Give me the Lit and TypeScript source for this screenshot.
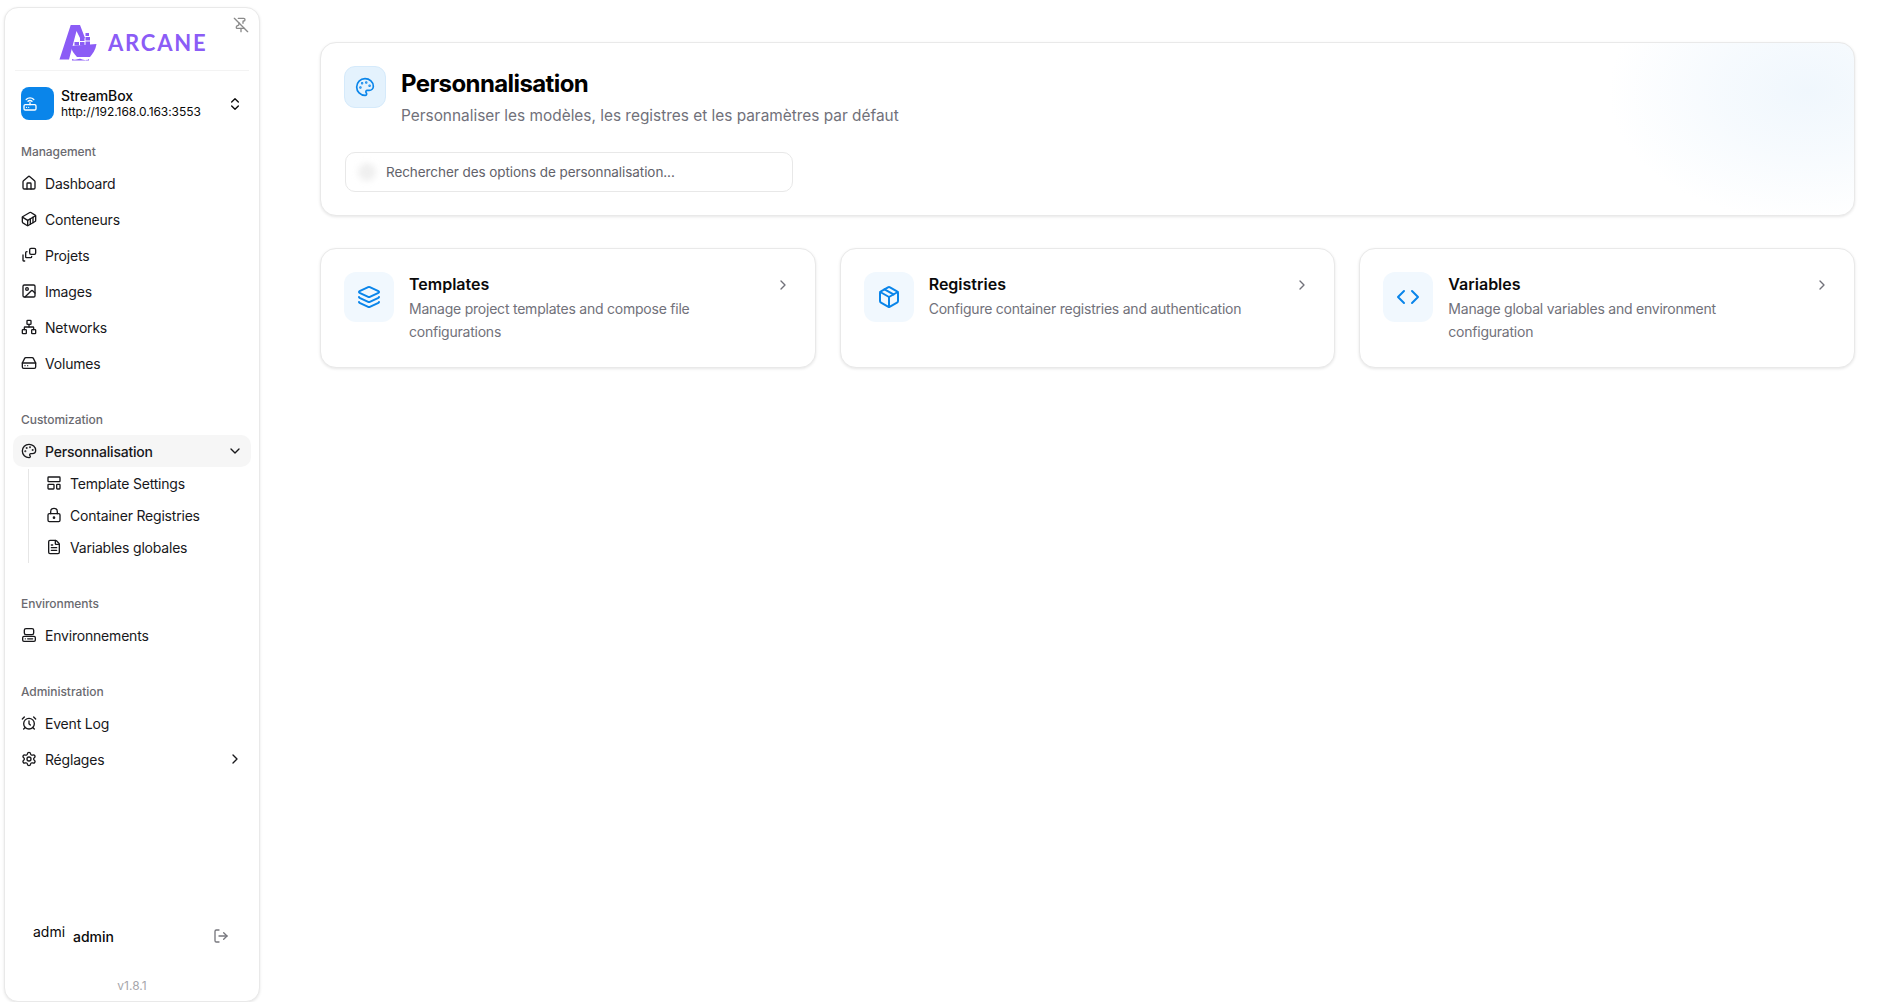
import { LitElement, html, css, svg } from "lit";
import { customElement } from "lit/decorators.js";

const I: Record<string, any> = {
  house: svg`<path d="M15 21v-8a1 1 0 0 0-1-1h-4a1 1 0 0 0-1 1v8"/><path d="M3 10a2 2 0 0 1 .709-1.528l7-5.999a2 2 0 0 1 2.582 0l7 5.999A2 2 0 0 1 21 10v9a2 2 0 0 1-2 2H5a2 2 0 0 1-2-2z"/>`,
  container: svg`<path d="M22 7.7c0-.6-.4-1.2-.8-1.5l-6.3-3.9a1.72 1.72 0 0 0-1.7 0l-10.3 6c-.5.2-.9.8-.9 1.4v6.6c0 .5.4 1.2.8 1.5l6.3 3.9a1.72 1.72 0 0 0 1.7 0l10.3-6c.5-.3.9-1 .9-1.5Z"/><path d="M10 21.9V14L2.1 9.1"/><path d="m10 14 11.9-6.9"/><path d="M14 19.8v-8.1"/><path d="M18 17.5V9.4"/>`,
  projects: svg`<rect x="13" y="2" width="9" height="9" rx="2"/><path d="M9 7H8.500a1.500 1.500 0 0 0-1.500 1.500V15a1 1 0 0 0 1 1h6.500a1.500 1.500 0 0 0 1.500-1.500V14"/><path d="M3 12v8a1 1 0 0 0 1 1h1.500"/>`,
  image: svg`<rect x="3" y="3" width="18" height="18" rx="2"/><circle cx="9" cy="9" r="2"/><path d="m21 15-3.086-3.086a2 2 0 0 0-2.828 0L6 21"/>`,
  network: svg`<rect x="16" y="16" width="6" height="6" rx="1"/><rect x="2" y="16" width="6" height="6" rx="1"/><rect x="9" y="2" width="6" height="6" rx="1"/><path d="M5 16v-3a1 1 0 0 1 1-1h12a1 1 0 0 1 1 1v3"/><path d="M12 12V8"/>`,
  drive: svg`<line x1="22" x2="2" y1="12" y2="12"/><path d="M5.450 5.110 2 12v6a2 2 0 0 0 2 2h16a2 2 0 0 0 2-2v-6l-3.450-6.890A2 2 0 0 0 16.760 4H7.240a2 2 0 0 0-1.790 1.110z"/><line x1="6" x2="6.010" y1="16" y2="16"/><line x1="10" x2="10.010" y1="16" y2="16"/>`,
  palette: svg`<path d="M12 22a1 1 0 0 1 0-20 10 9 0 0 1 10 9 5 5 0 0 1-5 5h-2.250a1.750 1.750 0 0 0-1.400 2.800l.3.4a1.750 1.750 0 0 1-1.400 2.800z"/><circle cx="13.500" cy="6.500" r=".5" fill="currentColor"/><circle cx="17.500" cy="10.500" r=".5" fill="currentColor"/><circle cx="6.500" cy="12.500" r=".5" fill="currentColor"/><circle cx="8.500" cy="7.500" r=".5" fill="currentColor"/>`,
  template: svg`<rect x="3" y="3" width="18" height="7" rx="1"/><rect x="3" y="14" width="9" height="7" rx="1"/><rect x="16" y="14" width="5" height="7" rx="1"/>`,
  lock: svg`<circle cx="12" cy="16" r="1"/><rect x="3" y="10" width="18" height="12" rx="2"/><path d="M7 10V7a5 5 0 0 1 10 0v3"/>`,
  file: svg`<path d="M6 22a2 2 0 0 1-2-2V4a2 2 0 0 1 2-2h8a2.400 2.400 0 0 1 1.704.706l3.588 3.588A2.400 2.400 0 0 1 20 8v12a2 2 0 0 1-2 2z"/><path d="M14 2v5a1 1 0 0 0 1 1h5"/><path d="M10 9H8"/><path d="M16 13H8"/><path d="M16 17H8"/>`,
  server: svg`<rect x="5" y="2.500" width="14" height="9" rx="2.500"/><rect x="2.500" y="14" width="19" height="7.500" rx="2"/><path d="M6.500 17.800h.01"/><path d="M10 17.800h7.500"/>`,
  alarm: svg`<circle cx="12" cy="13" r="8"/><path d="M12 9v4l2 2"/><path d="M5 3 2 6"/><path d="m22 6-3-3"/><path d="M6.380 18.700 4 21"/><path d="M17.640 18.670 20 21"/>`,
  settings: svg`<path d="M9.671 4.136a2.340 2.340 0 0 1 4.659 0 2.340 2.340 0 0 0 3.319 1.915 2.340 2.340 0 0 1 2.330 4.033 2.340 2.340 0 0 0 0 3.831 2.340 2.340 0 0 1-2.330 4.033 2.340 2.340 0 0 0-3.319 1.915 2.340 2.340 0 0 1-4.659 0 2.340 2.340 0 0 0-3.320-1.915 2.340 2.340 0 0 1-2.330-4.033 2.340 2.340 0 0 0 0-3.831A2.340 2.340 0 0 1 6.350 6.051a2.340 2.340 0 0 0 3.319-1.915"/><circle cx="12" cy="12" r="3"/>`,
  logout: svg`<path d="m16 17 5-5-5-5"/><path d="M21 12H9"/><path d="M9 21H5a2 2 0 0 1-2-2V5a2 2 0 0 1 2-2h4"/>`,
  pinoff: svg`<path d="M12 17v5"/><path d="M15 9.340V7a1 1 0 0 1 1-1 2 2 0 0 0 0-4H7.890"/><path d="m2 2 20 20"/><path d="M9 9v1.760a2 2 0 0 1-1.110 1.790l-1.780.9A2 2 0 0 0 5 15.240V16a1 1 0 0 0 1 1h11"/>`,
  layers: svg`<path d="M12.830 2.180a2 2 0 0 0-1.660 0L2.600 6.080a1 1 0 0 0 0 1.830l8.580 3.910a2 2 0 0 0 1.660 0l8.580-3.900a1 1 0 0 0 0-1.830z"/><path d="M2 12a1 1 0 0 0 .58.91l8.600 3.910a2 2 0 0 0 1.650 0l8.580-3.900A1 1 0 0 0 22 12"/><path d="M2 17a1 1 0 0 0 .58.91l8.600 3.910a2 2 0 0 0 1.650 0l8.580-3.900A1 1 0 0 0 22 17"/>`,
  box: svg`<path d="M11 21.730a2 2 0 0 0 2 0l7-4A2 2 0 0 0 21 16V8a2 2 0 0 0-1-1.730l-7-4a2 2 0 0 0-2 0l-7 4A2 2 0 0 0 3 8v8a2 2 0 0 0 1 1.730z"/><path d="M12 22V12"/><polyline points="3.290 7 12 12 20.710 7"/><path d="m7.500 4.270 9 5.150"/>`,
  code: svg`<path d="m16 18 6-6-6-6"/><path d="m8 6-6 6 6 6"/>`,
  router: svg`<rect x="3" y="13" width="18" height="8" rx="2"/><path d="M6.800 17h.01"/><path d="M10 17h.01"/><path d="M12 13v-3"/><path d="M9 8a4.200 4.200 0 0 1 6 0"/><path d="M6.300 5.300a8 8 0 0 1 11.400 0"/>`,
  up: svg`<path d="m7 15 5 5 5-5"/><path d="m7 9 5-5 5 5"/>`,
  down: svg`<path d="m6 9 6 6 6-6"/>`,
  right: svg`<path d="m9 18 6-6-6-6"/>`,
};

const icon = (n: string, cls = "i") =>
  html`<svg class=${cls} viewBox="0 0 24 24" fill="none" stroke="currentColor" stroke-width="2" stroke-linecap="round" stroke-linejoin="round">${I[n]}</svg>`;

const groups = [
  { label: "Management", items: [["house", "Dashboard"], ["container", "Conteneurs"], ["projects", "Projets"], ["image", "Images"], ["network", "Networks"], ["drive", "Volumes"]] },
  { label: "Customization", items: [["palette", "Personnalisation", "down"]], subs: [["template", "Template Settings"], ["lock", "Container Registries"], ["file", "Variables globales"]] },
  { label: "Environments", items: [["server", "Environnements"]] },
  { label: "Administration", items: [["alarm", "Event Log"], ["settings", "Réglages", "right"]] },
];

const cards = [
  { icon: "layers", title: "Templates", desc: "Manage project templates and compose file configurations" },
  { icon: "box", title: "Registries", desc: "Configure container registries and authentication" },
  { icon: "code", title: "Variables", desc: "Manage global variables and environment configuration" },
];

@customElement("app-root")
export class AppRoot extends LitElement {
  static styles = css`
    :host { display: block; font-family: Inter, "Liberation Sans", sans-serif; color: #0a0a0a; background: #fff; }
    * { box-sizing: border-box; }
    .page { display: flex; height: 1002px; overflow: hidden; }
    .i { width: 16px; height: 16px; flex: none; }

    .side { flex: none; width: 256px; height: 995px; margin: 7px 0 0 4px; display: flex; flex-direction: column;
      border: 1px solid #e9e9e9; border-radius: 14px; box-shadow: 0 1px 3px rgba(0,0,0,.1); background: #fff; }
    .brand { position: relative; height: 63px; margin: 0 10px; border-bottom: 1px solid #f3f3f3; display: flex; align-items: center; gap: 7px; padding: 5px 0 0 42px; flex: none; }
    .logo { width: 44px; height: 42px; flex: none; }
    .word { font-size: 22px; font-weight: 700; letter-spacing: 1.800px; color: #8b5cf6; line-height: 1; margin-top: 3px; font-family: Lato, Inter, sans-serif; }
    .pin { position: absolute; right: 0; top: 9px; color: #8a8a8a; }
    .env { flex: none; display: flex; align-items: center; margin: 16px 0 15px 16px; height: 33px; }
    .env-ic { width: 33px; height: 33px; border-radius: 8px; background: #0a85ea; color: #fff; display: flex; align-items: center; justify-content: center; flex: none; }
    .env-tx { margin-left: 7px; flex: 1; line-height: 16px; }
    .env-n { font-size: 14px; font-weight: 500; letter-spacing: -.1px; }
    .env-u { font-size: 12px; letter-spacing: -.05px; }
    .env .i { margin-right: 16px; }

    .groups { display: flex; flex-direction: column; gap: 24px; padding: 0 8px; }
    .label { height: 32px; padding-left: 8px; display: flex; align-items: center; font-size: 12px; font-weight: 500; color: #6a6a70; letter-spacing: -.05px; }
    .items { display: flex; flex-direction: column; gap: 4px; }
    .item { height: 32px; display: flex; align-items: center; gap: 8px; padding: 0 8px; border-radius: 10px; font-size: 14px; letter-spacing: -.2px; color: #18181b; }
    .item.on { background: #f6f6f6; font-weight: 500; }
    .item .t { flex: 1; }
    .subs { margin: 2px 0 0 15px; border-left: 1px solid #e6e6e6; padding-left: 9px; height: 94px; display: flex; flex-direction: column; gap: 4px; }
    .sub { height: 28px; display: flex; align-items: center; gap: 8px; padding: 0 8px; font-size: 14px; letter-spacing: -.2px; color: #18181b; }

    .foot { margin-top: auto; flex: none; }
    .user { display: flex; align-items: center; padding: 0 0 0 28px; height: 32px; font-size: 14px; }
    .alt { width: 40px; transform: translateY(-5px); }
    .uname { font-weight: 500; flex: 1; }
    .user .i { color: #77777d; margin-right: 30px; }
    .ver { text-align: center; font-size: 12px; color: #a6a6ab; margin: 26px 0 7px; line-height: 16px; }

    .main { flex: 1; padding: 42px 48px 0 60px; display: flex; flex-direction: column; gap: 32px; min-width: 0; }
    .head { height: 174px; padding: 23px; border: 1px solid #e9e9e9; border-radius: 16px; box-shadow: 0 1px 3px rgba(0,0,0,.1);
      background: radial-gradient(200px 130px at 97% 28%, #f0f7fd 0%, rgba(240,247,253,.6) 45%, rgba(255,255,255,0) 100%), #fff; flex: none; }
    .h-top { display: flex; gap: 15px; }
    .h-ic { width: 42px; height: 42px; border-radius: 11px; background: #e4f2fd; border: 1px solid #d5eafb; color: #0a85ea; display: flex; align-items: center; justify-content: center; flex: none; }
    .h-ic .i { width: 20px; height: 20px; }
    h1 { margin: 2px 0 0; font-size: 24px; line-height: 32px; font-weight: 700; letter-spacing: -.6px; color: #000; }
    .sub-h { font-size: 15.400px; line-height: 22px; color: #71717a; margin-top: 5px; }
    .search { margin: 25px 0 0 1px; width: 448px; height: 40px; border: 1px solid #e8e8e8; border-radius: 10px; display: flex; align-items: center; gap: 10px; padding-left: 12px; font-size: 13.500px; letter-spacing: -.07px; color: #62626a; }
    .blob { width: 18px; height: 18px; border-radius: 50%; background: #efefef; filter: blur(3px); flex: none; }

    .cards { display: grid; grid-template-columns: repeat(3, 1fr); gap: 24px; }
    .card { height: 120px; padding: 24px 23px; display: flex; border: 1px solid #e9e9e9; border-radius: 16px; box-shadow: 0 1px 3px rgba(0,0,0,.1); background: #fff; }
    .c-ic { width: 50px; height: 50px; margin-top: -1px; border-radius: 12px; background: #f1f8fe; color: #0a85ea; display: flex; align-items: center; justify-content: center; flex: none; }
    .c-ic .i { width: 24px; height: 24px; }
    .c-tx { flex: 1; margin-left: 15px; margin-right: 30px; }
    .c-t { font-size: 16px; line-height: 22px; font-weight: 600; color: #0a0a0a; }
    .c-d { font-size: 14px; line-height: 23px; letter-spacing: -.23px; color: #71717a; margin-top: 2px; }
    .c-ch { color: #71717a; margin: 4px 1px 0 0; }
  `;

  render() {
    return html`<div class="page">
      <aside class="side">
        <div class="brand">
          <svg class="logo" viewBox="0 0 44 42" fill="#8b5cf6">
            <path d="M2.500 38.500 13.700 4H23l5 13-4 2-4.500-9L12 38.500z"/>
            <path d="M13.500 25 39.500 23c-1 6-4 10-6.500 13H20c-3-3-5.500-7-6.500-11z"/>
            <path d="M15 38c4 2 6-1 9 0s5 2 8 0v1.500H15z"/>
            <path d="M17.500 24.500v-3.500h4.500v3.500zM23 24.500V21h4.500v3.500zM28.500 24v-3.500H33V24zM23 20v-3.500h4.500V20zM28.500 19.500V16H33v3.500zM28.500 15v-3H32v3z"/>
          </svg>
          <span class="word">ARCANE</span>
          <span class="pin">${icon("pinoff")}</span>
        </div>
        <div class="env">
          <div class="env-ic">${icon("router", "i")}</div>
          <div class="env-tx"><div class="env-n">StreamBox</div><div class="env-u">http://192.168.0.163:3553</div></div>
          ${icon("up")}
        </div>
        <div class="groups">
          ${groups.map(g => html`<div>
            <div class="label">${g.label}</div>
            <div class="items">
              ${g.items.map(it => html`<div class="item ${it[2] === "down" ? "on" : ""}">${icon(it[0])}<span class="t">${it[1]}</span>${it[2] ? icon(it[2]) : ""}</div>`)}
            </div>
            ${g.subs ? html`<div class="subs">${g.subs.map(s => html`<div class="sub">${icon(s[0])}<span>${s[1]}</span></div>`)}</div>` : ""}
          </div>`)}
        </div>
        <div class="foot">
          <div class="user"><span class="alt">admi</span><span class="uname">admin</span>${icon("logout")}</div>
          <div class="ver">v1.8.1</div>
        </div>
      </aside>
      <main class="main">
        <section class="head">
          <div class="h-top">
            <div class="h-ic">${icon("palette")}</div>
            <div><h1>Personnalisation</h1><div class="sub-h">Personnaliser les modèles, les registres et les paramètres par défaut</div></div>
          </div>
          <div class="search"><span class="blob"></span><span>Rechercher des options de personnalisation...</span></div>
        </section>
        <section class="cards">
          ${cards.map(c => html`<div class="card">
            <div class="c-ic">${icon(c.icon)}</div>
            <div class="c-tx"><div class="c-t">${c.title}</div><div class="c-d">${c.desc}</div></div>
            <span class="c-ch">${icon("right")}</span>
          </div>`)}
        </section>
      </main>
    </div>`;
  }
}
